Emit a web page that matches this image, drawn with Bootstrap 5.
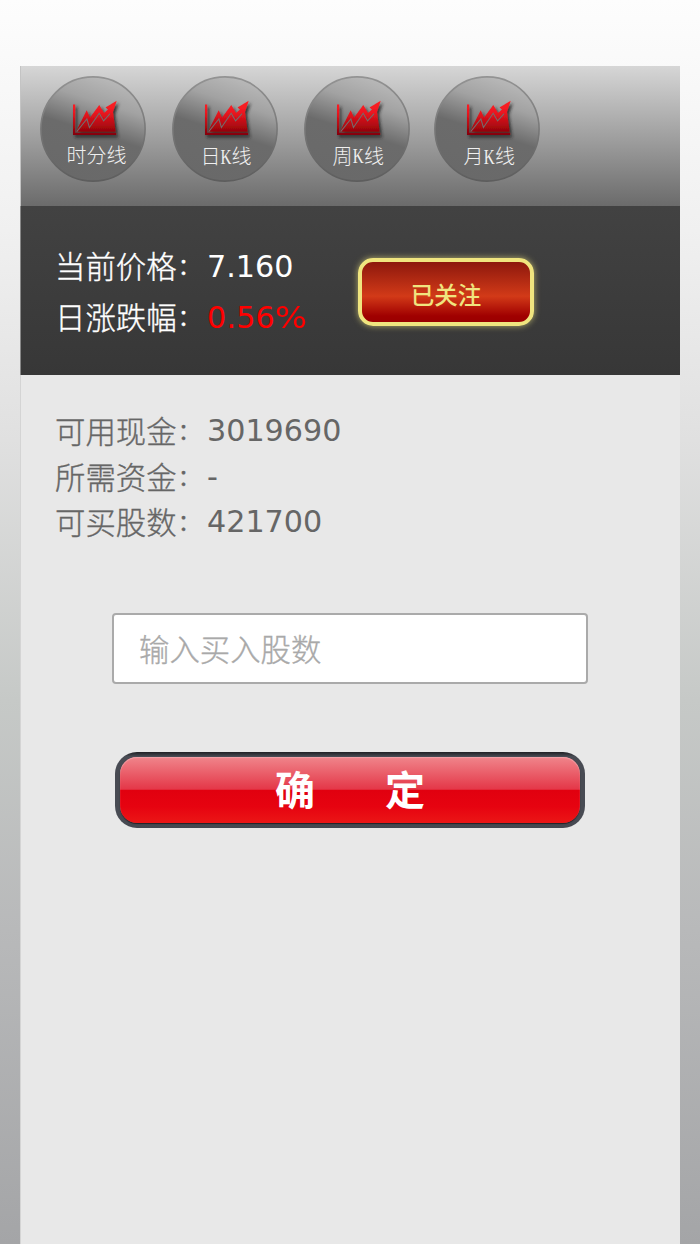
<!DOCTYPE html>
<html lang="zh-CN">
<head>
<meta charset="utf-8">
<meta name="viewport" content="width=device-width, initial-scale=1">
<title>买入</title>
<link href="https://cdn.jsdelivr.net/npm/bootstrap@5.3.0/dist/css/bootstrap.min.css" rel="stylesheet">
<style>
html{height:100%}
body{height:1244px;overflow:hidden;padding:66px 20px 0;font-family:"DejaVu Sans","Noto Sans CJK SC",sans-serif;font-size:30.2px;line-height:45.6px;background:linear-gradient(#fdfdfd 0,#f0f0f0 230px,#e0e0e0 440px,#c6c9c7 700px,#b8b9ba 930px,#a4a5a7 1244px)}
.trade-page{background:#e8e8e8;height:1178px;width:660px;box-shadow:inset 1px 0 #d4d4d4}
.chart-tabs{height:140px;padding:10px 0 0 19px;background:linear-gradient(#d6d6d6,#6b6b6b);border-left:1px solid #c4c4c4}
.chart-tab{width:106px;height:106px;margin-right:26px;flex:none;display:block}
.chart-tab:nth-child(3){margin-right:24px}
.chart-tab text{font-family:"Noto Sans CJK SC",sans-serif;font-weight:300;font-size:20px;fill:#f0f0f0}
.chart-tab .latin{font-family:"Liberation Serif",serif;font-size:21.5px}
.quote{height:169px;padding:35px 0 0 34px;background:linear-gradient(#424242,#373737);border-left:1px solid #888;color:#fff;line-height:51px}
.zh{font-family:"Noto Sans CJK SC",sans-serif;font-weight:300;font-size:30.4px;width:152px;height:45px;flex:none;margin-top:-1px;-webkit-text-stroke:.35px currentColor}
.quote .zh{height:52px}
.funds .zh{margin-top:0}
.colon{vertical-align:4px;line-height:1;font-size:22px;padding-left:1.5px;font-weight:400}
.quote-text{width:303px}
.rise{color:#f00;letter-spacing:.2px}
.percent{display:inline-block;transform:scaleX(1.12);transform-origin:left}
.follow{width:176px;height:68px;margin-top:17px;border:4px solid #f0e57f;border-radius:15px;background:linear-gradient(#8d180d,#d23a18 57%,#a00000 90%,#9a0000);box-shadow:0 0 6px #f0e57faa;color:#f0e57f;font:500 23.5px/64px "Noto Sans CJK SC",sans-serif;padding:0}
.follow span{display:block}
.funds{padding:33px 35px 0;color:#666}
.qty{width:476px;height:71px;margin:68px 0 0 92px;border:2px solid #aaa;border-radius:4px;padding:0 25px;font:300 30.4px "Noto Sans CJK SC",sans-serif;background:#fff}
.qty::placeholder{color:#a9a9a9;opacity:1;-webkit-text-stroke:.35px #a9a9a9}
.submit{width:470px;height:76px;margin:68px 0 0 95px;padding:0;border:0;border-radius:22px;color:#fff;font:700 40px/72px "Noto Sans CJK SC",sans-serif;gap:70px;background:linear-gradient(#202125,#484b53 6%,#484b53 90%,#44474f);position:relative;z-index:0}
.submit::before{content:"";position:absolute;z-index:-1;inset:5px 5px 5px;border-radius:17px;background:linear-gradient(#f0858b,#e43748 49%,#e1000f 50%,#e60310 75%,#eb1616);box-shadow:inset 0 1px 1px #f3a2a8,0 1px 1px #202126}
</style>
</head>
<body>
<svg width="0" height="0" class="position-absolute">
<defs>
<linearGradient id="disc" x1=".66" y1="0" x2=".34" y2="1"><stop offset="0" stop-color="#bababa"/><stop offset=".25" stop-color="#a2a2a2"/><stop offset=".53" stop-color="#6b6b6b"/><stop offset="1" stop-color="#696969"/></linearGradient>
<linearGradient id="ring" x2="0" y2="1"><stop stop-color="#939393"/><stop offset="1" stop-color="#5d5d5d"/></linearGradient>
<linearGradient id="red" gradientUnits="userSpaceOnUse" x1="0" y1="24" x2="0" y2="59"><stop stop-color="#ff2020"/><stop offset=".35" stop-color="#ed1720"/><stop offset="1" stop-color="#830008"/></linearGradient>
<filter id="soft" x="-20%" y="-20%" width="150%" height="150%"><feDropShadow dx="2" dy="2.5" stdDeviation="1.5" flood-color="#222" flood-opacity=".85"/></filter>
<g id="chart">
<circle cx="53" cy="53" r="52.1" fill="url(#disc)" stroke="url(#ring)" stroke-width="1.6"/>
<g filter="url(#soft)">
<path fill="url(#red)" d="M33 28.500h2.200v28.300h41V59H33z"/>
<path fill="url(#red)" d="M36.500 54.500 46.700 34.300 50 41.500 59.300 29 64 37l4-3.500-2.500-2L76.700 24.700 73 36l2.700 19.700H36.500z"/>
<path d="M36.700 55.700 46.900 43l2.500 8.500 9.800-14.300 4.400 7.700 6.500-7.200" fill="none" stroke="#77696a" stroke-width="1.100"/>
</g>
</g>
</defs>
</svg>
<main class="trade-page">
<nav class="chart-tabs d-flex">
<svg class="chart-tab" viewBox="0 0 106 106"><use href="#chart"/><text x="26.500" y="87">时分线</text></svg>
<svg class="chart-tab" viewBox="0 0 106 106"><use href="#chart"/><text x="28.500" y="88">日</text><text class="latin" textLength="11" lengthAdjust="spacingAndGlyphs" x="48.500" y="87.500">K</text><text x="59.500" y="88">线</text></svg>
<svg class="chart-tab" viewBox="0 0 106 106"><use href="#chart"/><text x="28.500" y="87.500">周</text><text class="latin" x="48.700" y="87" textLength="11" lengthAdjust="spacingAndGlyphs">K</text><text x="60" y="87.500">线</text></svg>
<svg class="chart-tab" viewBox="0 0 106 106"><use href="#chart"/><text x="29.500" y="88">月</text><text class="latin" x="49.700" y="87.500" textLength="11" lengthAdjust="spacingAndGlyphs">K</text><text x="61" y="88">线</text></svg>
</nav>
<section class="quote d-flex">
<div class="quote-text">
<div class="d-flex"><span class="zh">当前价格<span class="colon">：</span></span><span>7.160</span></div>
<div class="d-flex"><span class="zh">日涨跌幅<span class="colon">：</span></span><span class="rise">0.56<span class="percent">%</span></span></div>
</div>
<button class="follow" type="button"><span>已关注</span></button>
</section>
<section class="funds">
<div class="d-flex"><span class="zh">可用现金<span class="colon">：</span></span><span>3019690</span></div>
<div class="d-flex"><span class="zh">所需资金<span class="colon">：</span></span><span>-</span></div>
<div class="d-flex"><span class="zh">可买股数<span class="colon">：</span></span><span>421700</span></div>
</section>
<input class="qty d-block" type="text" placeholder="输入买入股数">
<button class="submit d-flex justify-content-center" type="button"><span>确</span><span>定</span></button>
</main>
<script src="https://cdn.jsdelivr.net/npm/bootstrap@5.3.0/dist/js/bootstrap.bundle.min.js"></script>
</body>
</html>
